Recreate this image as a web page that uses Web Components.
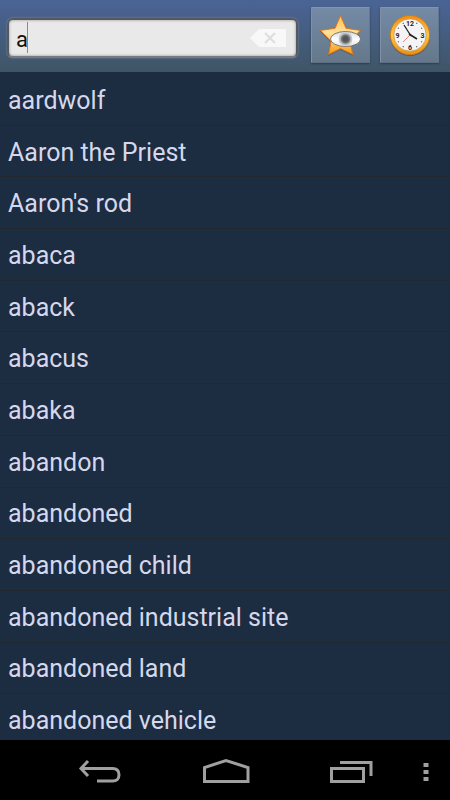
<!DOCTYPE html>
<html lang="en">
<head>
<meta charset="utf-8">
<meta name="viewport" content="width=device-width, initial-scale=1">
<title>Dictionary</title>
<style>
    html, body {
        height: 100%;
        margin: 0;
    }

    body {
        background: #000;
        font-family: Roboto, "Liberation Sans", sans-serif;
    }
</style>
</head>
<body>
<dictionary-app></dictionary-app>

<script>
function attachTemplate(element, templateString) {
    const template = document.createElement('template');
    template.innerHTML = templateString;

    const shadowRoot = element.attachShadow({mode: "open"});
    shadowRoot.appendChild(template.content.cloneNode(true));
    return shadowRoot;
}

class SearchBox extends HTMLElement {
    constructor() {
        super();

        const shadowRoot = attachTemplate(this, `
            <style>
                :host {
                    display: flex;
                    align-items: center;
                    box-sizing: border-box;
                    height: 40px;
                    padding: 0 10px 0 7px;
                    border: 2px solid #55595e;
                    border-bottom-color: #777b7f;
                    border-radius: 6px;
                    background: #e9e9e9;
                    box-shadow: 0 0 2px #8b929b, inset 0 0 3px #8c8c8c;
                }

                input {
                    flex: 1;
                    min-width: 0;
                    height: 32px;
                    padding: 2px 0 0;
                    box-sizing: border-box;
                    border: 0;
                    outline: 0;
                    color: #111;
                    font: 22px/30px Roboto, "Liberation Sans", sans-serif;
                    /* resting cursor after the typed letter */
                    background: linear-gradient(#8a8a8a, #8a8a8a) 11px 0 / 1px 31px no-repeat;
                }

                button {
                    display: flex;
                    padding: 0;
                    border: 0;
                    background: none;
                }
            </style>

            <input type="text" aria-label="Search word">
            <button type="button" aria-label="Clear">
                <svg width="36" height="18" viewBox="0 0 36 18">
                    <path d="M0 9 8 1Q9 0 10 0H36V18H10Q9 18 8 17Z" fill="#f8f8f8"/>
                    <path d="M15 4 25 14M25 4 15 14" stroke="#dedede" stroke-width="2"/>
                </svg>
            </button>
        `);

        const input = shadowRoot.querySelector("input");
        input.value = this.getAttribute("value") || "";
        shadowRoot.querySelector("button").addEventListener("click", () => {
            input.value = "";
            input.focus();
        });
    }
}

class ToolButton extends HTMLElement {
    constructor() {
        super();

        const shadowRoot = attachTemplate(this, `
            <style>
                :host {
                    display: block;
                }

                button {
                    display: flex;
                    align-items: center;
                    justify-content: center;
                    box-sizing: border-box;
                    width: 59px;
                    height: 56px;
                    padding: 0;
                    border: 1px solid #8394ab;
                    border-color: #8394ab #647890 #607084 #8090a5;
                    border-radius: 1px;
                    background: linear-gradient(#748aa6, #65788b);
                    box-shadow: 0 1px 2px #2b3d52;
                }
            </style>

            <button type="button"><slot></slot></button>
        `);
        shadowRoot.querySelector("button").setAttribute("aria-label", this.getAttribute("label"));
    }
}

class StarIcon extends HTMLElement {
    constructor() {
        super();

        attachTemplate(this, `
            <style>
                :host, svg { display: block; }
            </style>

            <svg width="44" height="44" viewBox="0 0 44 44">
                <defs>
                    <linearGradient id="gold" x1="0" y1="0" x2="0" y2="1">
                        <stop offset="0" stop-color="#ffbd4c"/>
                        <stop offset=".45" stop-color="#ffe29b"/>
                        <stop offset="1" stop-color="#f79a13"/>
                    </linearGradient>
                    <radialGradient id="iris">
                        <stop offset=".3" stop-color="#555"/>
                        <stop offset=".6" stop-color="#777"/>
                        <stop offset=".7" stop-color="#aaaeb4"/>
                        <stop offset="1" stop-color="#d3d6da"/>
                    </radialGradient>
                    <linearGradient id="white" x1="0" y1="0" x2="0" y2="1">
                        <stop offset="0" stop-color="#d2d4d8"/>
                        <stop offset=".5" stop-color="#fff"/>
                        <stop offset="1" stop-color="#e2e4e7"/>
                    </linearGradient>
                </defs>
                <path d="M21 4 27 16 41 18 31 29 34 43 21 37 9 43 11 29 1 18 15 16Z" fill="#34455b" opacity=".45"/>
                <path d="M21.5 2.5 27 15.3 41.3 17.4 30.8 28.2 33.9 41.4 21.5 35.6 9.6 41.4 12 28.2 1.4 17.4 16 15.3Z"
                      fill="url(#gold)" stroke="#d9771d" stroke-width="1" stroke-linejoin="round"/>
                <ellipse cx="26.5" cy="26" rx="15" ry="7.5" fill="url(#white)" stroke="#5f6368" stroke-width=".8"/>
                <circle cx="26.5" cy="26" r="7" fill="url(#iris)"/>
            </svg>
        `);
    }
}

class ClockIcon extends HTMLElement {
    constructor() {
        super();

        attachTemplate(this, `
            <style>
                :host, svg { display: block; }
                text { font: bold 7px Roboto, "Liberation Sans", sans-serif; }
            </style>

            <svg width="44" height="44" viewBox="0 0 44 44">
                <defs>
                    <linearGradient id="ring" x1="0" y1="0" x2="0" y2="1">
                        <stop offset="0" stop-color="#ee9218"/>
                        <stop offset=".5" stop-color="#ffc644"/>
                        <stop offset="1" stop-color="#ee9414"/>
                    </linearGradient>
                </defs>
                <circle cx="22" cy="23" r="20" fill="#34455b" opacity=".5"/>
                <circle cx="22" cy="22" r="18" fill="#f4f4f6" stroke="url(#ring)" stroke-width="3.4"/>
                <circle cx="22" cy="22" r="19.6" fill="none" stroke="#cf7515" stroke-width=".8"/>
                <circle cx="22" cy="22" r="16.2" fill="none" stroke="#c8862d" stroke-width=".7"/>
                <g fill="#222" text-anchor="middle">
                    <text x="22" y="12.5">12</text>
                    <text x="34.5" y="24.5">3</text>
                    <text x="22" y="37">6</text>
                    <text x="9.5" y="24.5">9</text>
                </g>
                <path d="M28.5 10.7 29 9.9M33.3 15.5 34.1 15M33.3 28.5 34.1 29M28.5 33.3 29 34.1M15.5 33.3 15 34.1M10.7 28.5 9.9 29M10.7 15.5 9.9 15M15.5 10.7 15 9.9"
                      stroke="#444" stroke-width="1.2"/>
                <path d="M22 22 15 29" stroke="#ef8b72" stroke-width="1"/>
                <path d="M23 23 16 12" stroke="#222" stroke-width="1.3"/>
                <path d="M21 21 29 26" stroke="#222" stroke-width="1.6"/>
            </svg>
        `);
    }
}

class WordList extends HTMLElement {
    constructor() {
        super();

        const shadowRoot = attachTemplate(this, `
            <style>
                :host {
                    display: flex;
                    flex-direction: column;
                    overflow: hidden;
                    background: #1c2c41;
                    color: #d5d8ec;
                }

                /* the last row runs a little below the fold */
                ul {
                    flex: 1;
                    display: grid;
                    grid-auto-rows: 1fr;
                    margin: 2px 0 -6px;
                    padding: 0;
                    list-style: none;
                }

                li {
                    display: flex;
                    align-items: center;
                    padding: 3px 8px 0;
                    border-bottom: 1px solid #22262d;
                    font-size: 25px;
                    line-height: 32px;
                }
            </style>

            <ul></ul>
        `);

        const ul = shadowRoot.querySelector("ul");
        for (const word of JSON.parse(this.getAttribute("words"))) {
            const li = document.createElement("li");
            li.textContent = word;
            ul.appendChild(li);
        }
    }
}

class NavBar extends HTMLElement {
    constructor() {
        super();

        attachTemplate(this, `
            <style>
                :host {
                    display: flex;
                    align-items: center;
                    box-sizing: border-box;
                    height: 60px;
                    padding: 3px 12px 0 37px;
                    background: #000;
                }

                button {
                    flex: 1;
                    display: flex;
                    justify-content: center;
                    padding: 0;
                    border: 0;
                    background: none;
                }

                .more {
                    flex: none;
                    width: 24px;
                }

                svg {
                    fill: none;
                    stroke: #a0a0a0;
                    stroke-width: 3;
                }
            </style>

            <button type="button" aria-label="Back">
                <svg width="44" height="28" viewBox="0 0 44 28">
                    <path d="M4 10.5H34.5Q41 10.5 41 16.8T34.5 23H19"/>
                    <path d="M10 3 3 10.5 10 18"/>
                </svg>
            </button>
            <button type="button" aria-label="Home">
                <svg width="48" height="28" viewBox="0 0 48 28">
                    <path d="M2.5 23.5V9.5L24 2.5 46 9.5V23.5Z"/>
                </svg>
            </button>
            <button type="button" aria-label="Recent apps">
                <svg width="44" height="28" viewBox="0 0 44 28">
                    <path d="M2.5 10.5H34.5V23.5H2.5ZM11 4.5H42V18"/>
                </svg>
            </button>
            <button class="more" type="button" aria-label="More">
                <svg width="6" height="20" viewBox="0 0 6 20">
                    <path d="M.5 1H5.5V5H.5ZM.5 8H5.5V12H.5ZM.5 15H5.5V19H.5Z" fill="#a0a0a0" stroke="none"/>
                </svg>
            </button>
        `);
    }
}

class DictionaryApp extends HTMLElement {
    constructor() {
        super();

        attachTemplate(this, `
            <style>
                :host {
                    display: flex;
                    flex-direction: column;
                    height: 100%;
                }

                header {
                    display: flex;
                    align-items: center;
                    box-sizing: border-box;
                    height: 72px;
                    padding: 0 11px 2px 7px;
                    gap: 10px;
                    background: linear-gradient(#4a6496, #3f5566);
                }

                search-box {
                    flex: 1;
                    min-width: 0;
                    margin: 6px 3px 0 0;
                }

                word-list {
                    flex: 1;
                    min-height: 0;
                }
            </style>

            <header>
                <search-box value="a"></search-box>
                <tool-button label="Favorites"><star-icon></star-icon></tool-button>
                <tool-button label="History"><clock-icon></clock-icon></tool-button>
            </header>
            <word-list words='["aardwolf", "Aaron the Priest", "Aaron&apos;s rod", "abaca", "aback", "abacus", "abaka", "abandon", "abandoned", "abandoned child", "abandoned industrial site", "abandoned land", "abandoned vehicle"]'></word-list>
            <nav-bar></nav-bar>
        `);
    }
}

customElements.define("search-box", SearchBox);
customElements.define("tool-button", ToolButton);
customElements.define("star-icon", StarIcon);
customElements.define("clock-icon", ClockIcon);
customElements.define("word-list", WordList);
customElements.define("nav-bar", NavBar);
customElements.define("dictionary-app", DictionaryApp);
</script>
</body>
</html>
